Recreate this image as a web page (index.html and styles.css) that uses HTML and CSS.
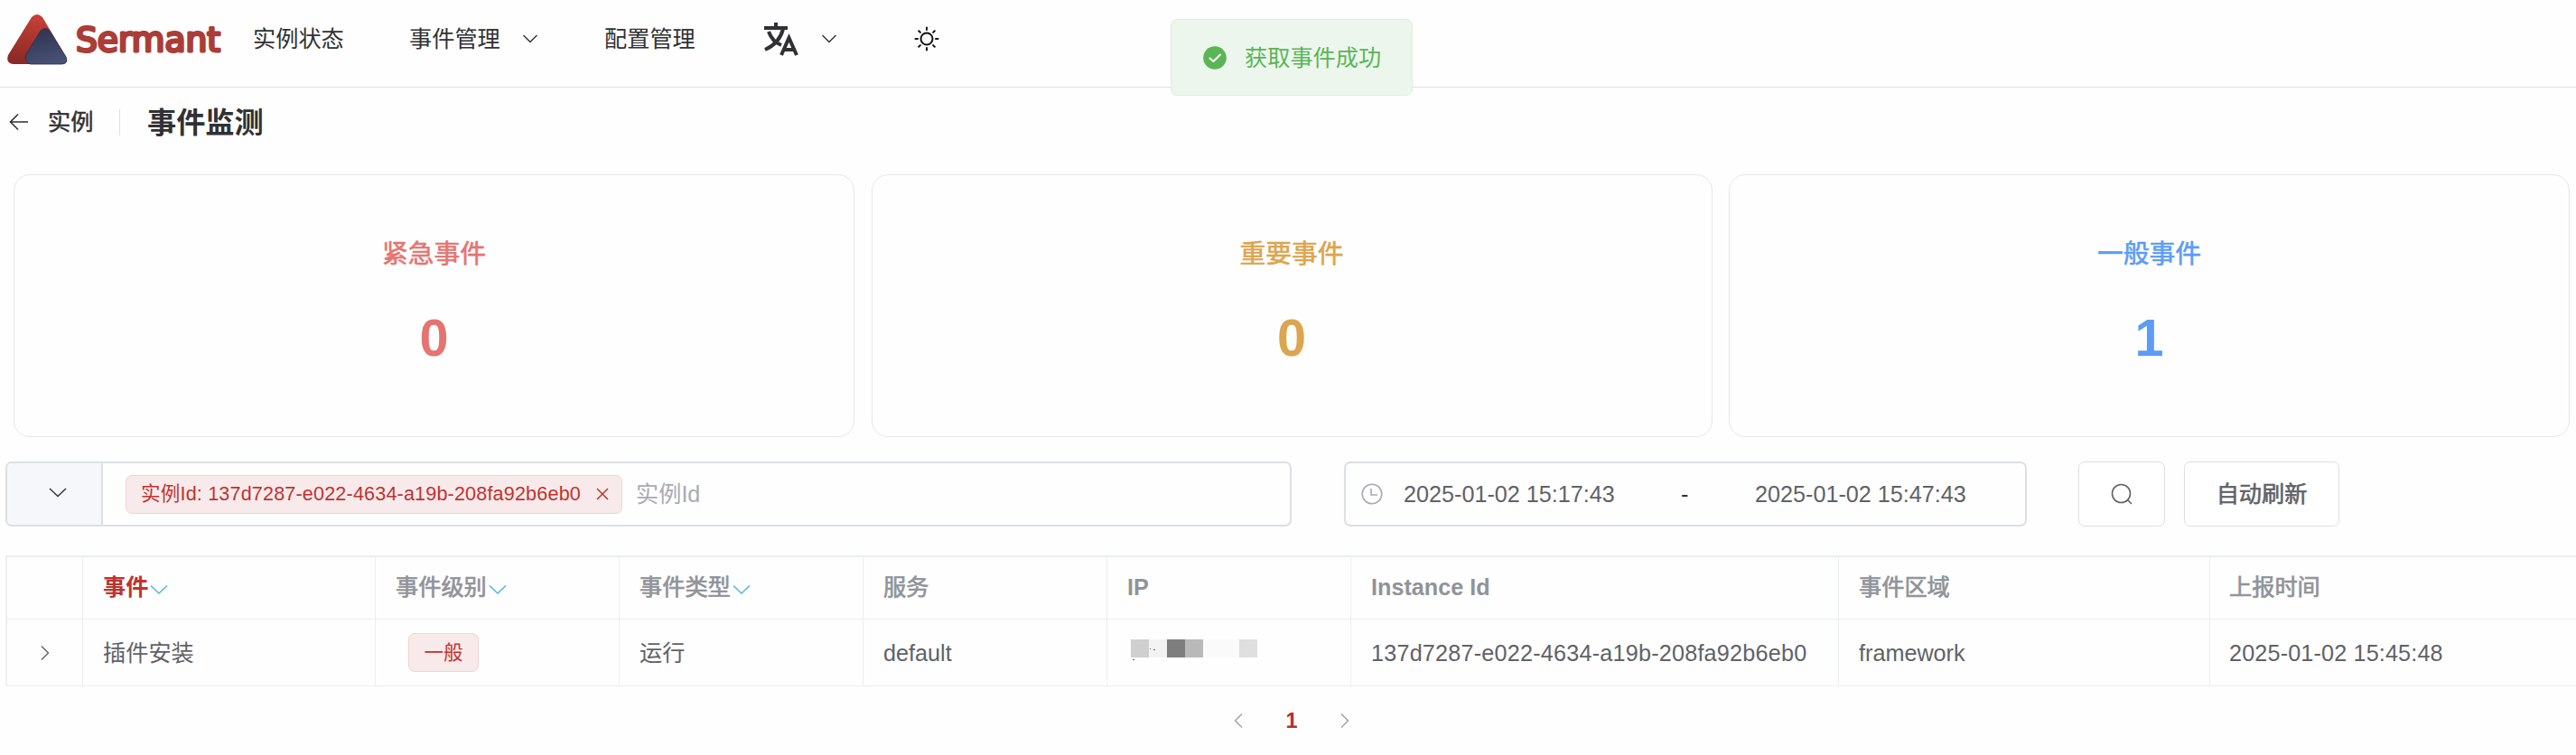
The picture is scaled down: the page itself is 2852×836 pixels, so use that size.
FILE: index.html
```html
<!DOCTYPE html>
<html lang="zh-CN">
<head>
<meta charset="utf-8">
<title>Sermant</title>
<link rel="stylesheet" href="styles.css">
</head>
<body>
<header class="header">
  <svg class="logo" width="246" height="64" viewBox="0 0 246 64">
    <defs>
      <linearGradient id="red" x1="0.6" y1="0" x2="0.3" y2="1"><stop offset="0" stop-color="#c94238"/><stop offset="1" stop-color="#8b2926"/></linearGradient>
      <linearGradient id="navy" x1="0.4" y1="0" x2="0.7" y2="1"><stop offset="0" stop-color="#2e3650"/><stop offset="1" stop-color="#4a5178"/></linearGradient>
    </defs>
    <path fill="url(#red)" d="M35 3Q41-3 47 3L73 47Q76 55 68 55H15Q6 54 9 45Z"/>
    <path fill="url(#navy)" stroke="#2a2f48" stroke-width=".8" d="M45 18Q50 13 55 18L73 47Q76 55 68 55H34Q26 53 29 44Z"/>
    <text class="wordmark" x="84" y="41" textLength="160" lengthAdjust="spacingAndGlyphs">Sermant</text>
  </svg>
  <nav class="nav">
    <span class="nav-status">实例状态</span>
    <span class="nav-event">事件管理</span>
    <svg class="nav-arrow" width="18" height="12" viewBox="0 0 18 12"><path d="M1.5 2L9 9.5L16.5 2"/></svg>
    <span class="nav-config">配置管理</span>
    <svg class="lang" width="40" height="38" viewBox="0 0 40 38"><path d="M1 7H27M14 1V7M6 11Q10 22 20 26M22 8Q18 24 2 31"/><path d="M20 37L28.5 18L37 37M23 31H34"/></svg>
    <svg class="nav-arrow" width="18" height="12" viewBox="0 0 18 12"><path d="M1.5 2L9 9.5L16.5 2"/></svg>
    <svg class="sun" width="28" height="28" viewBox="0 0 28 28"><circle cx="14" cy="14" r="6.5"/><path d="M14 1.5V4M14 24V26.5M1.5 14H4M24 14H26.5M5.2 5.2L6.9 6.9M21.1 21.1L22.8 22.8M5.2 22.8L6.9 21.1M21.1 6.9L22.8 5.2"/></svg>
  </nav>
</header>
<div class="toast">
  <svg width="26" height="26" viewBox="0 0 26 26"><circle cx="13" cy="13" r="12.8" fill="#5ab556"/><path d="M7.5 13.5L11.5 17L19 9.5" fill="none" stroke="#fff" stroke-width="2" stroke-linecap="round" stroke-linejoin="round"/></svg>
  <span>获取事件成功</span>
</div>
<div class="page-head">
  <svg class="back" width="22" height="20" viewBox="0 0 22 20"><path d="M21 10H1.5M10 1.5L1.5 10L10 18.5"/></svg>
  <span class="back-text">实例</span>
  <i class="divider"></i>
  <h1>事件监测</h1>
</div>
<section class="cards">
  <div class="card danger"><p>紧急事件</p><b>0</b></div>
  <div class="card warning"><p>重要事件</p><b>0</b></div>
  <div class="card normal"><p>一般事件</p><b>1</b></div>
</section>
<section class="filters">
  <div class="search-box">
    <div class="prepend"><svg class="nav-arrow" width="20" height="14" viewBox="0 0 20 14"><path d="M1 3L10 11.5L19 3"/></svg></div>
    <span class="tag filter-tag"><span class="tag-text">实例Id: 137d7287-e022-4634-a19b-208fa92b6eb0</span><svg width="14" height="14" viewBox="0 0 14 14"><path d="M1 1L13 13M13 1L1 13"/></svg></span>
    <span class="placeholder">实例Id</span>
  </div>
  <div class="date-box">
    <svg width="24" height="24" viewBox="0 0 24 24"><circle cx="12" cy="12" r="10.8"/><path d="M11 6V13H18"/></svg>
    <span class="date">2025-01-02 15:17:43</span><span class="dash">-</span><span class="date">2025-01-02 15:47:43</span>
  </div>
  <button class="btn btn-search"><svg width="24" height="24" viewBox="0 0 24 24"><circle cx="11.5" cy="11.5" r="10"/><path d="M18.5 18.5L23 23"/></svg></button>
  <button class="btn btn-refresh">自动刷新</button>
</section>
<div class="table">
  <div class="row head">
    <div></div>
    <div class="sorted">事件<svg class="sort" width="20" height="12" viewBox="0 0 20 12"><path d="M1 1.5L10 10L19 1.5"/></svg></div>
    <div>事件级别<svg class="sort" width="20" height="12" viewBox="0 0 20 12"><path d="M1 1.5L10 10L19 1.5"/></svg></div>
    <div>事件类型<svg class="sort" width="20" height="12" viewBox="0 0 20 12"><path d="M1 1.5L10 10L19 1.5"/></svg></div>
    <div>服务</div><div class="strong">IP</div><div class="strong">Instance Id</div><div>事件区域</div><div>上报时间</div>
  </div>
  <div class="row body">
    <div class="expand"><svg width="10" height="18" viewBox="0 0 10 18"><path d="M1 1.5L8.5 9L1 16.5"/></svg></div>
    <div>插件安装</div>
    <div><span class="tag level-tag">一般</span></div>
    <div>运行</div>
    <div>default</div>
    <div class="ip"><svg width="142" height="28" viewBox="0 0 142 28"><path fill="#cfcfcf" d="M2 2h20v20H2z"/><path fill="#f3f3f3" d="M22 2h20v20H22z"/><path fill="#7e7e7e" d="M42 2h20v20H42z"/><path fill="#b9b9b9" d="M62 2h20v20H62z"/><path fill="#fafafa" d="M82 2h40v20H82z"/><path fill="#dfdfdf" d="M122 2h20v20h-20z"/><path fill="#666" d="M27 13h2v1h-2zM4 24h2v1H4zM23 12h1v1h-1z"/></svg></div>
    <div class="instance">137d7287-e022-4634-a19b-208fa92b6eb0</div>
    <div>framework</div>
    <div class="time">2025-01-02 15:45:48</div>
  </div>
</div>
<div class="pager">
  <svg width="10" height="18" viewBox="0 0 10 18"><path d="M9 1.5L1.5 9L9 16.5"/></svg>
  <b>1</b>
  <svg width="10" height="18" viewBox="0 0 10 18"><path d="M1 1.5L8.5 9L1 16.5"/></svg>
</div>
</body>
</html>
```
FILE: styles.css
```css
* { box-sizing: border-box; }
body {
  margin: 0;
  width: 2852px;
  height: 836px;
  overflow: hidden;
  background: #fefefe;
  color: #606266;
  font-family: "Liberation Sans", "Noto Sans CJK SC", sans-serif;
  font-size: 25.2px;
  line-height: 36px;
}
svg { flex: none; fill: none; display: block; }
.header { height: 97px; border-bottom: 1px solid #dcdfe6; display: flex; align-items: flex-start; }
.logo { margin-top: 16px; overflow: visible; }
.wordmark {
  font-family: "DejaVu Sans", sans-serif;
  font-size: 36.5px;
  fill: #aa3d37;
  stroke: #aa3d37;
  stroke-width: 3px;
  stroke-linejoin: round;
}
.nav { display: flex; align-items: center; height: 85px; color: #303133; }
.nav-status { margin-left: 34px; width: 101px; }
.nav-event { margin-left: 72px; width: 101px; }
.nav-config { margin-left: 73px; width: 101px; }
.nav-arrow { stroke: #303133; stroke-width: 1.4; }
.nav-event + .nav-arrow { margin-left: 24px; }
.lang { margin-left: 75px; stroke: #303133; stroke-width: 4; }
.lang + .nav-arrow { margin-left: 24px; }
.sun { margin-left: 85px; stroke: #111; stroke-width: 2; stroke-linecap: round; }
.toast {
  position: absolute;
  left: 1296px;
  top: 21px;
  width: 268px;
  height: 85px;
  border: 1px solid #dbf0dc;
  border-radius: 7px;
  background: #ecf6ed;
  color: #5ab556;
  display: flex;
  align-items: center;
  padding-left: 35px;
  gap: 20px;
}
.page-head { height: 76px; display: flex; align-items: center; padding-left: 10px; color: #303133; }
.back { stroke: #303133; stroke-width: 1.6; }
.back-text { margin-left: 21px; -webkit-text-stroke: 0.5px; width: 51px; }
.divider { width: 1px; height: 29px; background: #dcdfe6; margin-left: 28px; }
h1 { margin: 2px 0 0 30px; font-size: 32.2px; font-weight: 600; line-height: 40px; }
.cards { margin: 20px 7px 0 15px; display: grid; grid-template-columns: repeat(3, 1fr); gap: 18.5px; }
.card {
  height: 291px;
  border: 1px solid #e4e7ed;
  border-radius: 18px;
  display: flex;
  flex-direction: column;
  align-items: center;
  padding-top: 66px;
}
.card p { margin: 0; font-size: 28.8px; line-height: 42px; -webkit-text-stroke: 0.6px; }
.card b { font-size: 57.6px; line-height: 66px; margin-top: 39px; }
.danger { color: #e57470; }
.warning { color: #dca550; }
.normal { color: #5b9cf8; }
.filters { margin: 27px 0 0 6px; display: flex; height: 72px; }
.search-box { width: 1424px; border: 2px solid #dcdfe6; border-radius: 7px; display: flex; align-items: center; }
.prepend {
  width: 106px;
  height: 100%;
  background: #f5f7fa;
  border-right: 2px solid #dcdfe6;
  border-radius: 5px 0 0 5px;
  display: flex;
  align-items: center;
  justify-content: center;
  padding: 0 0 4px 7px;
}
.tag {
  display: flex;
  align-items: center;
  height: 43px;
  font-size: 21.6px;
  color: #c0332f;
  background: #f8eaea;
  border: 1px solid #f1d3d2;
  border-radius: 7px;
}
.filter-tag { margin-left: 25px; width: 550px; padding-left: 16px; }
.tag-text { width: 504px; white-space: nowrap; letter-spacing: 0.16px; }
.tag svg { stroke: #c0332f; stroke-width: 1.5; }
.placeholder { margin-left: 15px; color: #a8abb2; }
.date-box { margin-left: 58px; width: 756px; border: 2px solid #dcdfe6; border-radius: 7px; display: flex; align-items: center; padding-left: 17px; white-space: nowrap; }
.date-box svg { stroke: #a8abb2; stroke-width: 1.6; }
.date { margin-left: 23px; width: 307px; }
.dash { width: 82px; color: #303133; }
.dash + .date { margin-left: 0; width: auto; }
.btn {
  font: inherit;
  color: #606266;
  background: #fff;
  border: 1px solid #dcdfe6;
  border-radius: 7px;
  padding: 0;
  display: flex;
  align-items: center;
  justify-content: center;
  -webkit-text-stroke: 0.6px;
}
.btn svg { stroke: #606266; stroke-width: 1.6; }
.btn-search { margin-left: 57px; width: 96px; }
.btn-refresh { margin-left: 21px; width: 172px; }
.table { margin: 32px 0 0 6px; border-top: 2px solid #ebeef5; border-left: 2px solid #ebeef5; }
.row { display: grid; grid-template-columns: 84px 324px 270px 270px 270px 270px 540px 411px 1fr; border-bottom: 1px solid #ebeef5; }
.row > div { border-right: 1px solid #ebeef5; padding-left: 22px; display: flex; align-items: center; white-space: nowrap; }
.row > div:last-child { border-right: 0; padding-left: 21px; }
.head { height: 69px; color: #909399; -webkit-text-stroke: 0.7px; }
.row.head > div { padding-bottom: 2px; }
.head .strong { font-weight: 700; -webkit-text-stroke: 0; }
.head .sorted { color: #c0332f; font-weight: 700; -webkit-text-stroke: 0; }
.body { height: 74px; }
.sort { stroke: #55b4e0; stroke-width: 1.6; margin: 6px 0 0 2px; }
.row > .expand { padding-left: 37px; }
.expand svg { stroke: #606266; stroke-width: 1.4; }
.level-tag { margin-left: 14px; width: 78px; justify-content: center; }
.instance { letter-spacing: 0.21px; }
.time { letter-spacing: 0.15px; }
.ip svg { margin-left: 2px; margin-top: -6px; }
.pager { display: flex; align-items: center; justify-content: center; height: 76px; margin-left: 8px; gap: 47px; }
.pager svg { stroke: #a0a3a9; stroke-width: 1.5; }
.pager b { color: #b8302e; font-size: 23.5px; }
```
